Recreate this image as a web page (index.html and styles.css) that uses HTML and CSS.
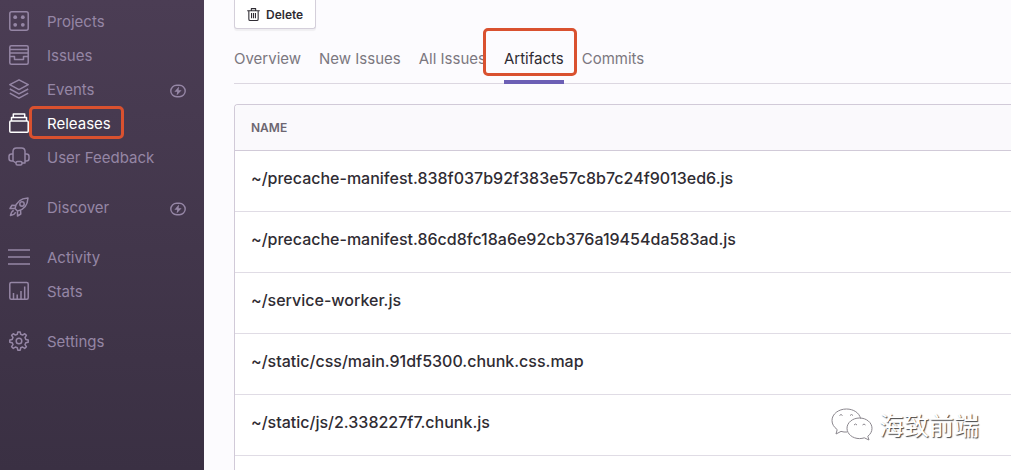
FILE: index.html
```html
<!DOCTYPE html>
<html lang="en">
<head>
  <meta charset="utf-8">
  <meta name="viewport" content="width=device-width, initial-scale=1.0">
  <title>Releases - Artifacts</title>
  <link rel="stylesheet" href="styles.css">
</head>

<body>
  <nav class="sidebar">
    <div class="group">
      <a href="#" class="item">
        <svg class="icon" viewBox="0 0 20 20"><rect x="0.8" y="0.8" width="18.4" height="18.4" rx="2"/><g class="solid"><circle cx="6.200" cy="6.200" r="1.900"/><circle cx="13.800" cy="6.200" r="1.900"/><circle cx="6.200" cy="13.800" r="1.900"/><circle cx="13.800" cy="13.800" r="1.900"/></g></svg>
        <span>Projects</span>
      </a>
      <a href="#" class="item">
        <svg class="icon" viewBox="0 0 20 20"><rect x="0.8" y="0.8" width="18.4" height="18.4" rx="1.5"/><path d="M1 4.5h18M1 8h18M1 11.5h4.5v3h9v-3H19"/></svg>
        <span>Issues</span>
      </a>
      <a href="#" class="item">
        <svg class="icon" viewBox="0 0 20 20"><path d="M10 .8 19.200 5.700l-9.200 4.900L.8 5.700zM.8 10l9.200 4.900 9.200-4.900M.8 14.200l9.200 4.900 9.200-4.900"/></svg>
        <span>Events</span>
        <svg class="bolt" viewBox="0 0 16 14"><rect x="0.8" y="1.2" width="14.4" height="11.6" rx="5.8"/><path class="solid" d="M9 2.6 4.400 7.800h2.800L6.600 11.400 11.600 6.200H8.600z"/></svg>
      </a>
      <a href="#" class="item active">
        <svg class="icon" viewBox="0 0 20 20"><rect x="0.8" y="8" width="18.4" height="11.2" rx="1"/><path d="M2.5 8V4.6h15V8M4.3 4.6V1h11.4v3.6"/></svg>
        <span class="marked">Releases</span>
      </a>
      <a href="#" class="item">
        <svg class="icon wide" viewBox="0 0 22 20"><path d="M5 14V4.5C5 2.5 6.5 1 8.5 1h5C15.5 1 17 2.5 17 4.5V14M5 7H3.500C2 7 1 8 1 9.500v2C1 13 2 14 3.500 14H5M17 7h1.500C20 7 21 8 21 9.500v2c0 1.500-1 2.500-2.500 2.500H17v2h-3"/><rect x="8" y="14.500" width="6" height="3.600" rx="1.500"/><path d="M5 14l3 2"/></svg>
        <span>User Feedback</span>
      </a>
    </div>
    <div class="group">
      <a href="#" class="item">
        <svg class="icon" viewBox="0 0 20 20"><path d="M6 11.5C7 6 11 1.500 19 1c-.5 8-5 12-10.500 13zM7 8.500 3 8.200 1 11.500l5 0M11.500 13l.3 4-3.300 2V14M4.800 13.500C2.500 14 2 16 1.500 18.500 4 18 6 17.500 6.500 15.200"/><circle cx="13" cy="7" r="2.200"/></svg>
        <span>Discover</span>
        <svg class="bolt" viewBox="0 0 16 14"><rect x="0.8" y="1.2" width="14.4" height="11.6" rx="5.8"/><path class="solid" d="M9 2.6 4.400 7.800h2.800L6.600 11.400 11.600 6.200H8.600z"/></svg>
      </a>
    </div>
    <div class="group">
      <a href="#" class="item">
        <svg class="icon wide" viewBox="0 0 22 20"><path d="M0 3h22M0 10h22M0 17h22"/></svg>
        <span>Activity</span>
      </a>
      <a href="#" class="item">
        <svg class="icon" viewBox="0 0 20 20"><rect x="0.8" y="1.5" width="18.4" height="16.7" rx="1.5"/><path d="M4.5 18v-6M8.2 18v-4.500M12 18v-8M15.700 18V5.500"/></svg>
        <span>Stats</span>
      </a>
    </div>
    <div class="group">
      <a href="#" class="item">
        <svg class="icon" viewBox="0 0 20 20"><circle cx="10" cy="10" r="2.8"/><path d="M8.300 3.300 8.800.9h2.400l.5 2.400 1.900.8 2.100-1.400 1.700 1.700-1.400 2.100.8 1.900 2.400.5v2.300l-2.400.5-.8 1.900 1.400 2.100-1.700 1.700-2.100-1.400-1.900.8-.5 2.400H8.800l-.5-2.400-1.900-.8-2.100 1.400-1.700-1.700L4 13.600l-.8-1.900-2.400-.5V8.900l2.400-.5L4 6.500 2.600 4.400l1.700-1.700 2.100 1.400z"/></svg>
        <span>Settings</span>
      </a>
    </div>
  </nav>

  <main class="content">
    <div class="actions">
      <button type="button" class="delete">
        <svg viewBox="0 0 12 12"><path d="M.2 2.500h11.600M4 2.300V.6h4v1.700M1.700 2.500v7.800c0 .8.400 1.200 1.200 1.200h6.200c.8 0 1.200-.4 1.200-1.200V2.500M4.200 4.500v5M6 4.500v5M7.800 4.500v5"/></svg>
        Delete
      </button>
    </div>

    <div class="tabs">
      <a href="#">Overview</a>
      <a href="#">New Issues</a>
      <a href="#">All Issues</a>
      <a href="#" class="current">Artifacts</a>
      <a href="#">Commits</a>
    </div>

    <div class="panel">
      <table>
        <thead>
          <tr><th>NAME</th></tr>
        </thead>
        <tbody>
          <tr><td>~/precache-manifest.838f037b92f383e57c8b7c24f9013ed6.js</td></tr>
          <tr><td>~/precache-manifest.86cd8fc18a6e92cb376a19454da583ad.js</td></tr>
          <tr><td>~/service-worker.js</td></tr>
          <tr><td>~/static/css/main.91df5300.chunk.css.map</td></tr>
          <tr><td>~/static/js/2.338227f7.chunk.js</td></tr>
        </tbody>
      </table>
    </div>
  </main>

  <div class="watermark">
    <svg viewBox="0 0 42 34"><path d="M16 25c-2 .2-4 0-6-.6L5 27l1.200-4.400C2.800 20 1 17 1 13.500 1 7 7.500 2 15.500 2c7 0 13 4 14 9.500"/><path d="M28.500 11C21.600 11 16 15.600 16 21.300s5.600 10.300 12.500 10.300c1.700 0 3.300-.3 4.800-.8l4.700 2.200-1.200-3.800c2.600-1.900 4.200-4.700 4.200-7.900C41 15.600 35.400 11 28.500 11z"/><path d="M8.500 8.500q1.500-2 3 0M19 8.500q1.500-2 3 0M23 18q1.500-2 3 0M31.500 18q1.500-2 3 0"/></svg>
    <span lang="zh">海致前端</span>
  </div>
</body>
</html>
```
FILE: styles.css
```css
* {
  box-sizing: border-box;
}

body {
  display: flex;
  position: relative;
  margin: 0;
  min-height: 100vh;
  background: #fcfbfe;
  color: #2f2c33;
  font-family: Inter, Roboto, sans-serif;
}

a {
  color: inherit;
  text-decoration: none;
}

svg {
  fill: none;
  stroke: currentColor;
  stroke-linejoin: round;
}

/* sidebar */
.sidebar {
  flex: none;
  width: 204px;
  padding: 4px 18px 0 9px;
  background: linear-gradient(#4b3d54, #3a3043);
  color: #9586a5;
  font-size: 15px;
}

.group {
  margin-bottom: 16px;
}

.item {
  display: flex;
  align-items: center;
  height: 34px;
}

.item.active {
  color: #fff;
}

.icon {
  width: 20px;
  height: 20px;
  margin-right: 18px;
  stroke-width: 1.5;
}

.icon.wide {
  width: 22px;
  margin: 0 17px 0 -1px;
}

.solid {
  fill: currentColor;
  stroke: none;
}

.bolt {
  width: 16px;
  height: 14px;
  margin: 4px 0 0 auto;
  stroke-width: 1.4;
}

/* red frames round the menu entry and the tab */
.marked,
.current {
  position: relative;
}

.marked::after,
.current::after {
  content: "";
  position: absolute;
  border: 3px solid #d9512f;
  border-radius: 5px;
}

.marked::after {
  inset: -8px -13px -6px -18px;
}

.current::after {
  inset: -20px -13px 4px -21px;
}

/* main column */
.content {
  flex: 1;
  display: flex;
  flex-direction: column;
  min-width: 0;
  padding-left: 30px;
}

.delete {
  display: flex;
  align-items: center;
  gap: 6px;
  height: 29px;
  padding: 0 12px;
  border: 1px solid #d4cfda;
  border-top: 0;
  border-radius: 0 0 3px 3px;
  background: #fff;
  box-shadow: 0 2px 1px rgba(0, 0, 0, 0.05);
  color: #2f2c33;
  font: 600 12px Inter, Roboto, sans-serif;
}

.delete svg {
  width: 13px;
  height: 13px;
}

.tabs {
  display: flex;
  gap: 18px;
  height: 55px;
  margin-bottom: 20px;
  padding-top: 19px;
  border-bottom: 1px solid #dcd7e1;
  color: #7b777f;
  font-size: 15px;
  line-height: 22px;
}

.tabs a {
  height: 36px;
}

.tabs .current {
  border-bottom: 4px solid #6c5fb5;
  color: #2f2c33;
}

/* artifact list */
.panel {
  flex: 1;
  border: 1px solid #d1cad8;
  border-width: 1px 0 0 1px;
  border-radius: 4px 0 0 0;
  background: #fff;
  overflow: hidden;
}

table {
  width: 100%;
  border-collapse: collapse;
}

th,
td {
  padding: 0 16px;
  text-align: left;
}

th {
  height: 45px;
  border-bottom: 1px solid #d1cad8;
  background: #faf9fc;
  color: #6c6671;
  font-size: 12px;
  font-weight: 600;
}

td {
  height: 61px;
  padding-bottom: 5px;
  border-bottom: 1px solid #e0dce5;
  font-size: 16px;
  font-weight: 500;
}

.watermark {
  display: flex;
  align-items: center;
  gap: 6px;
  position: absolute;
  right: 32px;
  bottom: 28px;
  color: #fff;
  font: 25px/36px "Noto Sans CJK SC", sans-serif;
  text-shadow: 1px 1px 1px #444;
}

.watermark svg {
  width: 42px;
  height: 34px;
  color: #8b878e;
}
```
